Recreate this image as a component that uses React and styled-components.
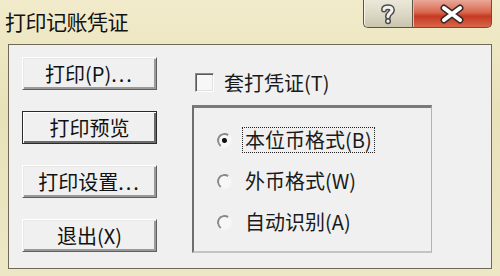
import React from 'react'
import styled, { createGlobalStyle } from 'styled-components'

const font = `"Noto Sans CJK SC", "Liberation Sans", sans-serif`

const GlobalStyle = createGlobalStyle`
  html, body {
    margin: 0;
    padding: 0;
    background: #ece5c0;
  }
`

const Frame = styled.div`
  width: 500px;
  height: 276px;
  box-sizing: border-box;
  display: flex;
  flex-direction: column;
  background: linear-gradient(180deg, #f1ebcb 0%, #e9e1b8 40%, #eee7c6 100%);
  font-family: ${font};
  color: #1a1a1a;
  overflow: hidden;
`

const TitleBar = styled.div`
  height: 44px;
  display: flex;
  justify-content: space-between;
  align-items: flex-start;
  padding-left: 5px;
  flex-shrink: 0;
`

const Title = styled.div`
  font-size: 21px;
  line-height: 42px;
  letter-spacing: -0.5px;
  color: #111;
`

const Controls = styled.div`
  display: flex;
  margin-right: 8px;
`

const CaptionButton = styled.div`
  height: 28px;
  box-sizing: border-box;
  display: flex;
  align-items: center;
  justify-content: center;
  border: 1px solid #5b5446;
  border-top: none;
`

const HelpButton = styled(CaptionButton)`
  width: 49px;
  border-right: none;
  border-radius: 0 0 0 5px;
  background: linear-gradient(180deg, #ebe8da 0%, #ddd9c6 50%, #c9c4ad 100%);
  box-shadow: inset 1px 0 #f6f4ea;
`

const CloseButton = styled(CaptionButton)`
  width: 80px;
  border-radius: 0 0 5px 0;
  background: linear-gradient(180deg, #e9a898 0%, #d9684f 45%, #c63a22 60%, #d8654a 100%);
  box-shadow: inset 1px 0 #f0b8a8;
`

const Client = styled.div`
  margin: 0 8px;
  height: 225px;
  box-sizing: border-box;
  border: 1px solid #6f6a58;
  background: #f0f0f0;
  display: flex;
  padding: 12px 0 0 13px;
`

const ButtonColumn = styled.div`
  display: flex;
  flex-direction: column;
  gap: 21px;
`

const PushButton = styled.button`
  width: 135px;
  height: 33px;
  box-sizing: border-box;
  margin: 0;
  padding: 0;
  font-family: ${font};
  font-size: 20px;
  color: #111;
  background: #f0f0f0;
  border: 1px solid;
  border-color: ${p => (p.$default ? '#2a2a2a' : '#ffffff #5e5e5e #5e5e5e #ffffff')};
  box-shadow: ${p =>
    p.$default
      ? 'inset 1px 1px #ffffff, inset -2px -2px #6a6a6a'
      : 'inset 1px 1px #e8e8e8, inset -2px -2px #9a9a9a'};
  display: flex;
  align-items: center;
  justify-content: center;
  line-height: 1;
`

const Dots = styled.span`
  letter-spacing: 2px;
`

const RightColumn = styled.div`
  margin-left: 35px;
  display: flex;
  flex-direction: column;
`

const CheckRow = styled.label`
  display: flex;
  align-items: center;
  margin-top: 15px;
  padding-left: 3px;
  height: 20px;
  font-size: 20px;
`

const CheckBox = styled.span`
  width: 19px;
  height: 19px;
  box-sizing: border-box;
  border: 1px solid;
  border-color: #8a8a8a #ffffff #ffffff #8a8a8a;
  box-shadow: inset 1px 1px #5a5a5a, inset -1px -1px #e0e0e0;
  background: #f7f7f7;
  margin-right: 10px;
`

const GroupBox = styled.div`
  margin-top: 13px;
  width: 240px;
  height: 148px;
  box-sizing: border-box;
  border-style: solid;
  border-width: 3px 1px 2px 2px;
  border-color: #7a7a7a #b4b4b4 #c4c4c4 #6e6e6e;
  padding: 19px 0 0 23px;
  display: flex;
  flex-direction: column;
  gap: 15px;
`

const RadioRow = styled.label`
  display: flex;
  align-items: center;
  height: 26px;
  font-size: 20px;
`

const RadioDot = styled.span`
  width: 15px;
  height: 15px;
  box-sizing: border-box;
  border-radius: 50%;
  border: 2px solid;
  border-color: #8a8a8a #f6f6f6 #f6f6f6 #8a8a8a;
  transform: rotate(-10deg);
  background: #f7f7f7;
  display: flex;
  align-items: center;
  justify-content: center;
  margin-right: 11px;

  &::after {
    content: '';
    width: 5px;
    height: 5px;
    border-radius: 50%;
    background: ${p => (p.$checked ? '#111' : 'transparent')};
  }
`

const RadioLabel = styled.span`
  padding: 1px 2px;
  line-height: 22px;
  outline: ${p => (p.$focused ? '1px dotted #222' : 'none')};
`

const HelpIcon = () => (
  <svg width="16" height="22" viewBox="0 0 16 22">
    <g fill="none" strokeLinecap="round" strokeLinejoin="round">
      <path d="M4 6.5 C4 3.5 12 3 12 7 C12 10 8 10 8 13.5" stroke="#4a4a4a" strokeWidth="6" />
      <path d="M4 6.5 C4 3.5 12 3 12 7 C12 10 8 10 8 13.5" stroke="#f2f2f2" strokeWidth="3" />
      <path d="M8 18 L8 18.2" stroke="#4a4a4a" strokeWidth="6" />
      <path d="M8 18 L8 18.2" stroke="#f2f2f2" strokeWidth="3" />
    </g>
  </svg>
)

const CloseIcon = () => (
  <svg width="28" height="20" viewBox="0 0 28 20">
    <path d="M6 4 L22 16 M22 4 L6 16" stroke="#3a2a26" strokeWidth="7" strokeLinecap="round" />
    <path d="M6 4 L22 16 M22 4 L6 16" stroke="#ffffff" strokeWidth="4" strokeLinecap="round" />
  </svg>
)

const options = [
  { label: '本位币格式(B)', checked: true },
  { label: '外币格式(W)', checked: false },
  { label: '自动识别(A)', checked: false },
]

export default function App() {
  return (
    <>
      <GlobalStyle />
      <Frame>
        <TitleBar>
          <Title>打印记账凭证</Title>
          <Controls>
            <HelpButton>
              <HelpIcon />
            </HelpButton>
            <CloseButton>
              <CloseIcon />
            </CloseButton>
          </Controls>
        </TitleBar>
        <Client>
          <ButtonColumn>
            <PushButton>
              打印(P)<Dots>...</Dots>
            </PushButton>
            <PushButton $default>打印预览</PushButton>
            <PushButton>
              打印设置<Dots>...</Dots>
            </PushButton>
            <PushButton>退出(X)</PushButton>
          </ButtonColumn>
          <RightColumn>
            <CheckRow>
              <CheckBox />
              套打凭证(T)
            </CheckRow>
            <GroupBox>
              {options.map((o, i) => (
                <RadioRow key={o.label}>
                  <RadioDot $checked={o.checked} />
                  <RadioLabel $focused={i === 0}>{o.label}</RadioLabel>
                </RadioRow>
              ))}
            </GroupBox>
          </RightColumn>
        </Client>
      </Frame>
    </>
  )
}
